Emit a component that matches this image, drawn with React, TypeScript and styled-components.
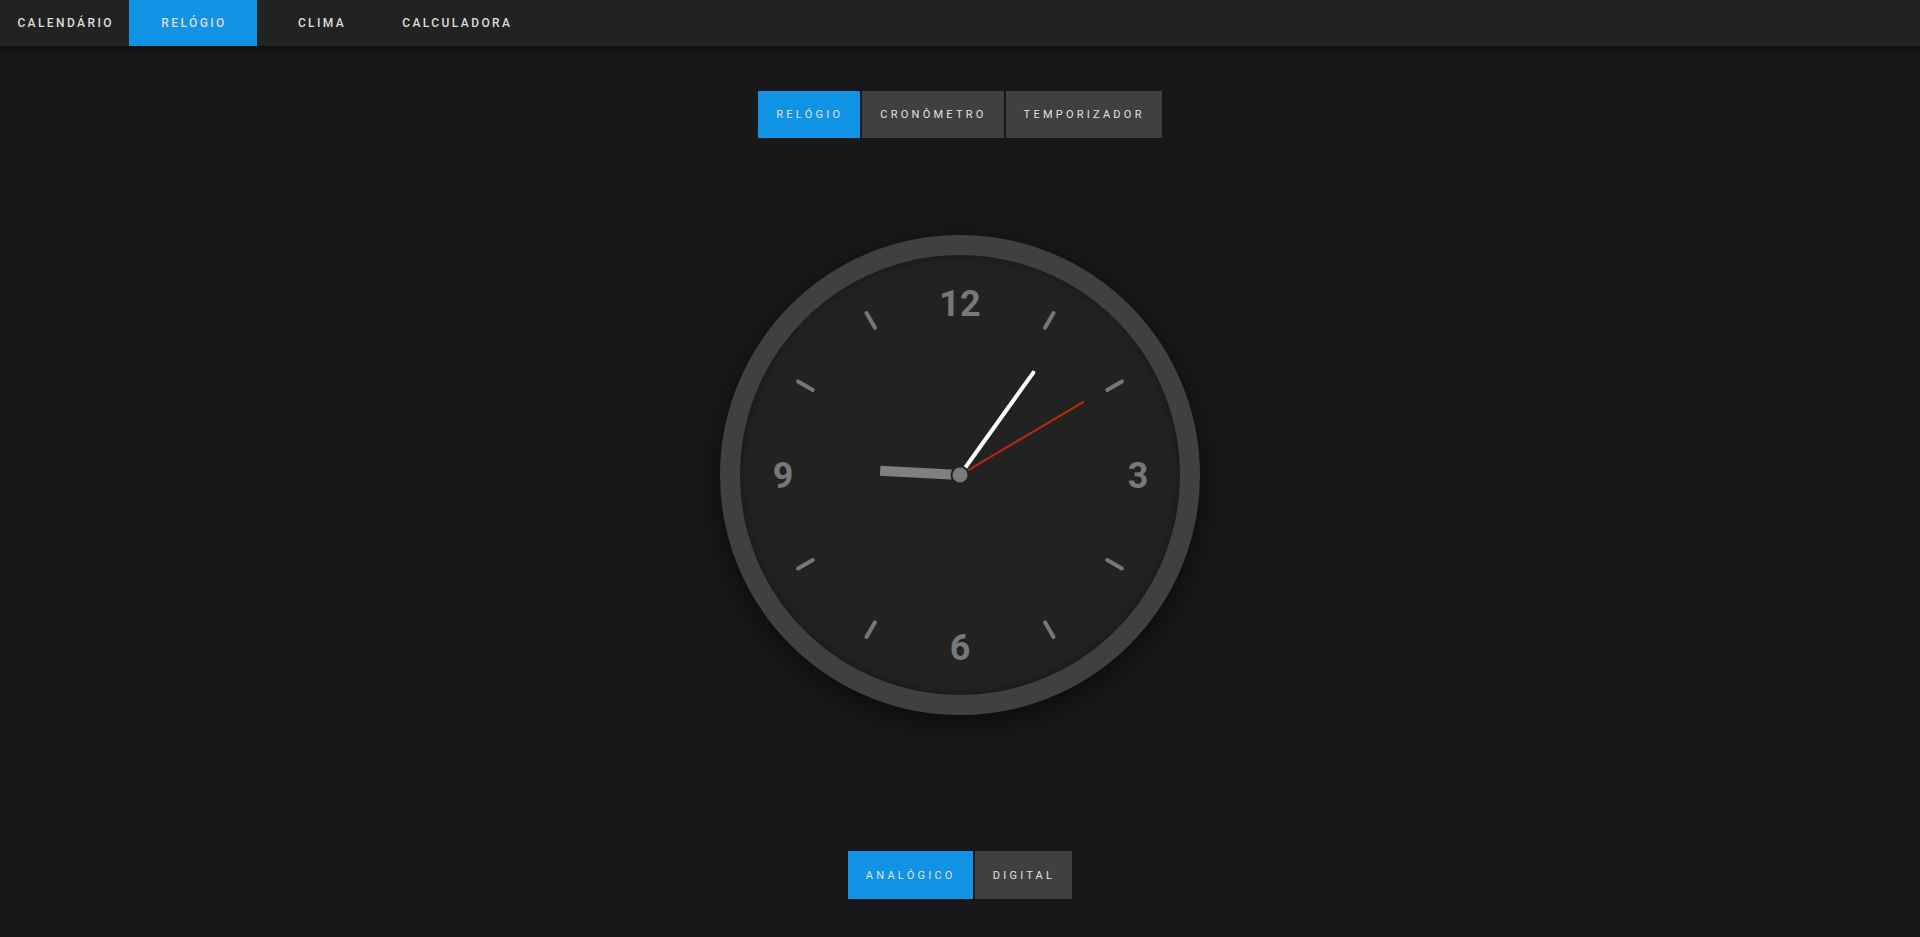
import React from "react";
import styled, { createGlobalStyle } from "styled-components";

const Global = createGlobalStyle`
  html, body { margin: 0; padding: 0; background: #181818; }
  body { font-family: Roboto, "Liberation Sans", sans-serif; }
  * { box-sizing: border-box; }
`;

const Page = styled.div`
  min-height: 937px;
  background: #181818;
  display: flex;
  flex-direction: column;
`;

const NavBar = styled.nav`
  height: 46px;
  background: #222222;
  box-shadow: 0 2px 6px rgba(0, 0, 0, 0.55);
  display: flex;
  align-items: stretch;
  position: relative;
  z-index: 1;
`;

const NavItem = styled.div<{ $active?: boolean }>`
  min-width: 128px;
  padding: 0 15px;
  display: flex;
  align-items: center;
  justify-content: center;
  font-size: 12px;
  font-weight: 500;
  letter-spacing: 2.4px;
  text-indent: 2.4px;
  color: #dddddd;
  background: ${(p) => (p.$active ? "#1193e5" : "transparent")};
`;

const Main = styled.main`
  display: flex;
  flex-direction: column;
  align-items: center;
`;

const TabGroup = styled.div<{ $top: number }>`
  display: flex;
  gap: 2px;
  margin-top: ${(p) => p.$top}px;
`;

const Tab = styled.div<{ $active?: boolean; $h: number }>`
  height: ${(p) => p.$h}px;
  padding: 0 17px 0 18px;
  display: flex;
  align-items: center;
  font-size: 11px;
  font-weight: 400;
  letter-spacing: 3.25px;
  color: #e2e2e2;
  background: ${(p) => (p.$active ? "#1193e5" : "#404040")};
`;

const ClockRing = styled.div`
  margin-top: 97px;
  width: 480px;
  height: 480px;
  border-radius: 50%;
  border: 20px solid #404040;
  background: #222222;
  box-shadow: 0 8px 28px rgba(0, 0, 0, 0.55), inset 0 0 12px rgba(0, 0, 0, 0.35);
  display: flex;
`;

const Face = styled.svg`
  width: 440px;
  height: 440px;
  display: block;
`;

const Numeral = styled.text`
  font-family: Roboto, "Liberation Sans", sans-serif;
  font-size: 36px;
  font-weight: 700;
  fill: #787878;
`;

const C = 220;

function polar(angleDeg: number, r: number) {
  const a = ((angleDeg - 90) * Math.PI) / 180;
  return { x: C + r * Math.cos(a), y: C + r * Math.sin(a) };
}

function Clock() {
  const ticks = [1, 2, 4, 5, 7, 8, 10, 11];
  const hourA = 273;
  const minA = 35.6;
  const secA = 59.4;
  const h = polar(hourA, 80);
  const m = polar(minA, 126);
  const s = polar(secA, 144);
  return (
    <ClockRing>
      <Face viewBox="0 0 440 440">
        <Numeral x={220} y={49} textAnchor="middle" dominantBaseline="central">12</Numeral>
        <Numeral x={398} y={221} textAnchor="middle" dominantBaseline="central">3</Numeral>
        <Numeral x={220} y={393} textAnchor="middle" dominantBaseline="central">6</Numeral>
        <Numeral x={43} y={221} textAnchor="middle" dominantBaseline="central">9</Numeral>
        {ticks.map((t) => {
          const p1 = polar(t * 30, 170);
          const p2 = polar(t * 30, 187);
          return (
            <line
              key={t}
              x1={p1.x}
              y1={p1.y}
              x2={p2.x}
              y2={p2.y}
              stroke="#777777"
              strokeWidth={4}
              strokeLinecap="round"
            />
          );
        })}
        <line x1={C} y1={C} x2={h.x} y2={h.y} stroke="#808080" strokeWidth={10} strokeLinecap="butt" />
        <line x1={C} y1={C} x2={m.x} y2={m.y} stroke="#ffffff" strokeWidth={4} strokeLinecap="round" />
        <line x1={C} y1={C} x2={s.x} y2={s.y} stroke="#c2290b" strokeWidth={2} strokeLinecap="butt" />
        <circle cx={C} cy={C} r={8.5} fill="#7a7a7a" stroke="#222222" strokeWidth={2} />
      </Face>
    </ClockRing>
  );
}

export default function App() {
  return (
    <Page>
      <Global />
      <NavBar>
        <NavItem>CALENDÁRIO</NavItem>
        <NavItem $active>RELÓGIO</NavItem>
        <NavItem>CLIMA</NavItem>
        <NavItem>CALCULADORA</NavItem>
      </NavBar>
      <Main>
        <TabGroup $top={45}>
          <Tab $h={47} $active>RELÓGIO</Tab>
          <Tab $h={47}>CRONÔMETRO</Tab>
          <Tab $h={47}>TEMPORIZADOR</Tab>
        </TabGroup>
        <Clock />
        <TabGroup $top={136}>
          <Tab $h={48} $active>ANALÓGICO</Tab>
          <Tab $h={48}>DIGITAL</Tab>
        </TabGroup>
      </Main>
    </Page>
  );
}
